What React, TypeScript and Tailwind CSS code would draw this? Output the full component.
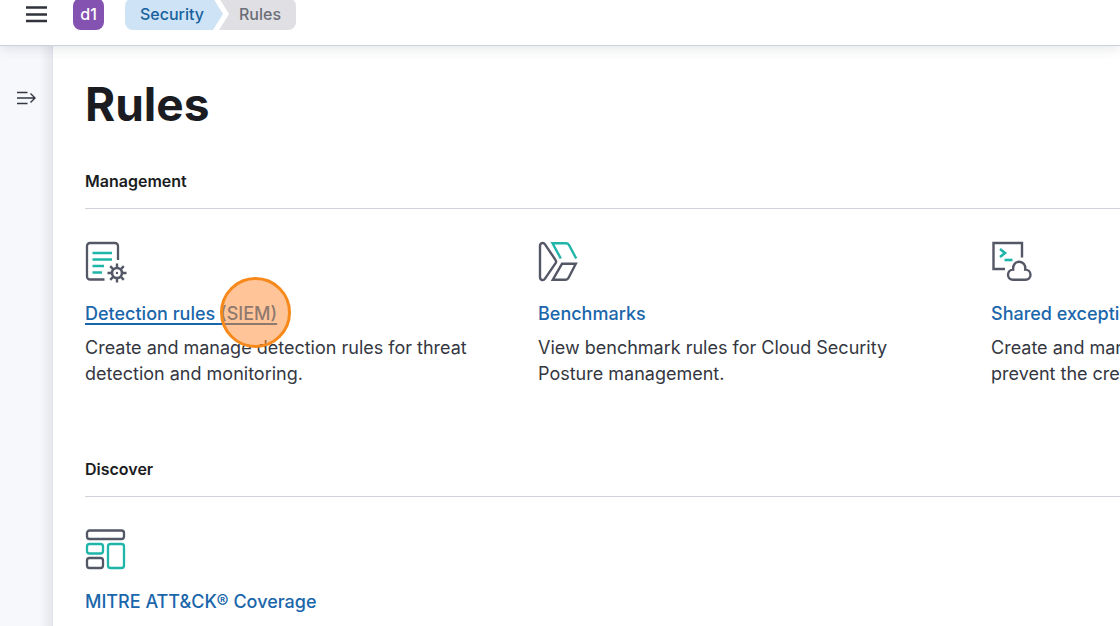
import type { ReactNode } from "react";

const INK = "#535766";
const TEAL = "#1fb5a8";

function RulesIcon() {
  return (
    <svg width="44" height="42" viewBox="0 0 44 42" fill="none" aria-hidden="true">
      <path d="M33 19V5a3 3 0 0 0-3-3H5a3 3 0 0 0-3 3v30.500a3 3 0 0 0 3 3h14.500" stroke={INK} strokeWidth="2.300" />
      <path d="M7.500 12H27M7.500 18.500H27M7.500 25H19M7.500 31.500h9.500" stroke={TEAL} strokeWidth="2.400" />
      <circle cx="32" cy="32" r="5" stroke={INK} strokeWidth="2.600" />
      <circle cx="32" cy="32" r="1.200" fill={INK} />
      <path
        d="M32 26.500v-4M32 41.500v-4M26.500 32h-4M41.500 32h-4M28.100 28.100l-2.900-2.900M38.800 38.800l-2.900-2.900M28.100 35.900l-2.900 2.900M38.800 25.200l-2.900 2.900"
        stroke={INK}
        strokeWidth="2.400"
      />
    </svg>
  );
}

function BenchmarksIcon() {
  return (
    <svg width="44" height="42" viewBox="0 0 44 42" fill="none" strokeWidth="2.400" aria-hidden="true">
      <path
        d="M2 5v31c0 3.200 3.400 4.200 5 1.700L17.600 22.100a2.600 2.600 0 0 0 0-3L7 3.300C5.400.9 2 1.900 2 5Z"
        stroke={INK}
      />
      <path d="M22.800 17.500 14.500 2.200H28c1.500 0 2.300.6 3 1.800l7.200 13.500" stroke={TEAL} />
      <path d="M24 22.800h13.800l-7.200 14c-.7 1.300-1.500 1.900-3 1.900H14.800l9.200-15.900Z" stroke={INK} />
    </svg>
  );
}

function ExceptionsIcon() {
  return (
    <svg width="44" height="42" viewBox="0 0 44 42" fill="none" strokeWidth="2.400" aria-hidden="true">
      <path d="M31 16.500V2H2.500v26h11.500" stroke={INK} />
      <path d="m9 8 5 4-5 4" stroke={TEAL} strokeWidth="2.600" />
      <path d="M13.500 19h8" stroke={TEAL} strokeWidth="2.600" />
      <path
        d="M22 38.800h12.500c2.800 0 5-2.200 5-5 0-2.900-2.300-5.200-5.300-5.200.6-4.500-2-7.800-6-7.800s-6.500 3.300-6 7.800c-3 0-5.200 2.300-5.200 5.200 0 2.800 2.200 5 5 5Z"
        stroke={INK}
      />
    </svg>
  );
}

function CoverageIcon() {
  return (
    <svg width="44" height="42" viewBox="0 0 44 42" fill="none" strokeWidth="2.300" aria-hidden="true">
      <rect x="2" y="1.500" width="37" height="8.500" rx="2.500" stroke={INK} />
      <rect x="2" y="15" width="16" height="9.500" rx="2.500" stroke={TEAL} />
      <rect x="23" y="15" width="16" height="24" rx="2.500" stroke={TEAL} />
      <rect x="2" y="29" width="16" height="10" rx="2.500" stroke={INK} />
    </svg>
  );
}

type CardProps = {
  icon: ReactNode;
  title: string;
  description?: string;
  active?: boolean;
};

function Card({ icon, title, description, active = false }: CardProps) {
  return (
    <article>
      {icon}
      <h3 className="mt-[15px] text-lg leading-8 font-medium whitespace-nowrap">
        <a
          href="#"
          className={
            active
              ? "relative text-[#1a66ab] underline decoration-2 underline-offset-3"
              : "text-[#1a66ab]"
          }
        >
          {title}
          {active && (
            <span className="pointer-events-none absolute -top-[26px] -right-3.5 size-[71px] rounded-full border-3 border-[#f7891b] bg-[#ff8c33]/50" />
          )}
        </a>
      </h3>
      {description && (
        <p className="mt-[5px] max-w-[396px] text-lg leading-[26px] text-[#343741]">{description}</p>
      )}
    </article>
  );
}

function Section({ title, children }: { title: string; children: ReactNode }) {
  return (
    <section>
      <h2 className="text-base leading-6 font-semibold text-[#1a1c21]">{title}</h2>
      <hr className="mt-[15px] border-[#d0d2d9]" />
      <div className="mt-8 grid grid-cols-[repeat(3,421px)] gap-8">{children}</div>
    </section>
  );
}

export default function App() {
  return (
    <div className="flex h-screen flex-col overflow-hidden bg-white font-['Inter',sans-serif]">
      <header className="relative z-10 flex h-[46px] shrink-0 items-start border-b border-[#cdd1dc] bg-white pl-[26px] shadow-[0_2px_12px_rgba(60,65,80,0.14)]">
        <button type="button" aria-label="Menu" className="mt-[6px]">
          <svg width="21" height="18" viewBox="0 0 21 18" stroke="#30333c" strokeWidth="2.300" aria-hidden="true">
            <path d="M0 1.500h21M0 8.500h21M0 15h21" />
          </svg>
        </button>
        <button
          type="button"
          className="-mt-0.5 ml-[26px] flex h-8 w-[31px] items-center justify-center rounded-lg bg-[#8452b0] text-base font-medium text-white"
        >
          d1
        </button>
        <nav aria-label="Breadcrumb" className="-mt-0.5 ml-[21px] flex text-base leading-8 font-medium">
          <a
            href="#"
            className="w-[98px] rounded-l-lg bg-[#cee3f5] pl-[15px] text-[#17619f] [clip-path:polygon(0_0,88px_0,100%_50%,88px_100%,0_100%)]"
          >
            Security
          </a>
          <span
            aria-current="page"
            className="-ml-1 w-[77px] rounded-r-lg bg-[#e0e0e4] pl-5 text-[#6b6e78] [clip-path:polygon(0_0,100%_0,100%_100%,0_100%,10px_50%)]"
          >
            Rules
          </span>
        </nav>
      </header>
      <div className="flex min-h-0 grow">
        <aside className="w-[53px] shrink-0 border-r border-[#e0e3ea] bg-[#f7f8fc] bg-linear-to-r from-[#f7f8fc] from-75% to-[#e6e8ee] pt-[45px] pl-[17px]">
          <button type="button" aria-label="Expand side navigation" className="block">
            <svg width="19" height="14" viewBox="0 0 19 14" fill="none" stroke="#343741" strokeWidth="1.400" aria-hidden="true">
              <path d="M0 1.500h10.500M0 7h18M0 12.500h10.500M13.500 2.500 18 7l-4.500 4.500" />
            </svg>
          </button>
        </aside>
        <main className="min-w-0 grow overflow-hidden pt-7 pl-8">
          <h1 className="text-[46px] leading-[60px] font-bold text-[#1a1c21]">Rules</h1>
          <div className="mt-[35px] flex flex-col gap-[70px]">
            <Section title="Management">
              <Card
                icon={<RulesIcon />}
                title="Detection rules (SIEM)"
                description="Create and manage detection rules for threat detection and monitoring."
                active
              />
              <Card
                icon={<BenchmarksIcon />}
                title="Benchmarks"
                description="View benchmark rules for Cloud Security Posture management."
              />
              <Card
                icon={<ExceptionsIcon />}
                title="Shared exception lists"
                description="Create and manage shared exceptions to prevent the creation of unwanted alerts."
              />
            </Section>
            <Section title="Discover">
              <Card icon={<CoverageIcon />} title="MITRE ATT&CK® Coverage" />
            </Section>
          </div>
        </main>
      </div>
    </div>
  );
}
